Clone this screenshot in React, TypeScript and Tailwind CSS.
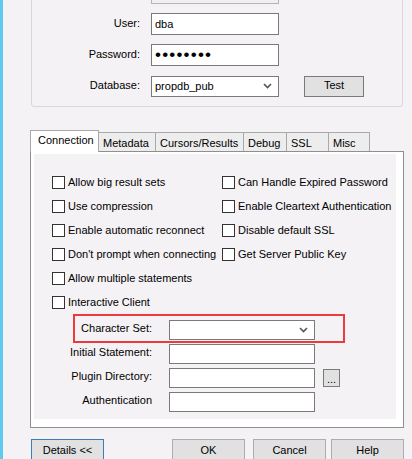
import React from "react";

const font = { fontFamily: '"Liberation Sans", Arial, sans-serif' };

function Chevron() {
  return (
    <svg width="9" height="6" viewBox="0 0 9 6" className="shrink-0">
      <path d="M1 1 L4.5 4.5 L8 1" fill="none" stroke="#555" strokeWidth="1.6" />
    </svg>
  );
}

function Checkbox({ label }: { label: string }) {
  return (
    <div className="flex items-center h-[24px]">
      <div className="w-[13px] h-[13px] border border-[#333] bg-white shrink-0" />
      <span className="ml-[3px] whitespace-nowrap">{label}</span>
    </div>
  );
}

function Button({ label, className = "" }: { label: string; className?: string }) {
  return (
    <div
      className={`h-[23px] w-[73px] border bg-[#e1e1e1] flex items-center justify-center pb-[1px] ${className}`}
    >
      {label}
    </div>
  );
}

const tabs = [
  { label: "Metadata", w: "w-[57px]" },
  { label: "Cursors/Results", w: "w-[88px]" },
  { label: "Debug", w: "w-[43px]" },
  { label: "SSL", w: "w-[42px]" },
  { label: "Misc", w: "w-[41px]" },
];

const leftChecks = [
  "Allow big result sets",
  "Use compression",
  "Enable automatic reconnect",
  "Don't prompt when connecting",
  "Allow multiple statements",
  "Interactive Client",
];
const rightChecks = [
  "Can Handle Expired Password",
  "Enable Cleartext Authentication",
  "Disable default SSL",
  "Get Server Public Key",
];

export default function App() {
  return (
    <div
      className="w-[412px] h-[459px] flex bg-[#f5f2f5] overflow-hidden text-[11px] text-black"
      style={font}
    >
      <div className="w-[3px] bg-[#5fcaf1] shrink-0" />
      <div className="flex flex-col ml-[27px] w-[374px]">
        {/* connection group */}
        <div className="ml-[1px] w-[372px] -mt-[30px] border border-[#d6d8de] rounded-[3px] pt-[11px] pb-[9px] flex flex-col gap-[9px]">
          <div className="flex items-center h-[22px]">
            <div className="w-[108px]" />
            <div className="ml-[11px] w-[128px] h-[22px] border border-[#b5b5b5] bg-[#f0f0f0]" />
          </div>
          <div className="flex items-center h-[22px]">
            <div className="w-[108px] text-right pb-[2px]">User:</div>
            <div className="ml-[11px] w-[128px] h-[22px] border border-[#7a7a7a] bg-white pl-[3px] flex items-center">
              dba
            </div>
          </div>
          <div className="flex items-center h-[22px]">
            <div className="w-[108px] text-right pb-[2px]">Password:</div>
            <div className="ml-[11px] w-[128px] h-[22px] border border-[#7a7a7a] bg-white pl-[3px] flex items-center">
              <span className="text-[17px] leading-none tracking-[1.2px] -mt-[1px]">••••••••</span>
            </div>
          </div>
          <div className="flex items-center h-[22px]">
            <div className="w-[108px] text-right pb-[2px]">Database:</div>
            <div className="ml-[11px] w-[128px] h-[21px] border border-[#7a7a7a] bg-white pl-[3px] pr-[6px] flex items-center justify-between">
              <span>propdb_pub</span>
              <Chevron />
            </div>
            <div className="ml-[25px] w-[60px] h-[21px] border border-[#7a7a7a] bg-[#e1e1e1] flex items-center justify-center pb-[1px]">
              Test
            </div>
          </div>
        </div>

        {/* tabs */}
        <div className="mt-[23px] h-[21px] flex items-end">
          <div className="relative z-10 w-[69px] h-[22px] -mb-[1px] bg-white border-l border-t border-r border-[#a9a9a9] pl-[7px] pt-[4px] leading-none">
            Connection
          </div>
          {tabs.map((t) => (
            <div
              key={t.label}
              className={`${t.w} h-[19px] bg-[#ededed] border-t border-r border-[#a9a9a9] pl-[4px] pt-[5px] leading-none`}
            >
              {t.label}
            </div>
          ))}
        </div>

        {/* panel */}
        <div className="w-[374px] h-[278px] border border-[#8f8f8f] bg-white pl-[3px] pr-[7px] pt-[2px] pb-[8px]">
          <div className="relative h-full bg-[#f5f2f5] pt-[16px] pb-[7px]">
            <div className="flex pl-[18px]">
              <div className="w-[170px] flex flex-col">
                {leftChecks.map((c) => (
                  <Checkbox key={c} label={c} />
                ))}
              </div>
              <div className="flex flex-col">
                {rightChecks.map((c) => (
                  <Checkbox key={c} label={c} />
                ))}
              </div>
            </div>

            <div className="mt-[6px] flex flex-col gap-[4px]">
              {[
                { label: "Character Set:", select: true },
                { label: "Initial Statement:" },
                { label: "Plugin Directory:", browse: true },
                { label: "Authentication" },
              ].map((f) => (
                <div key={f.label} className="flex h-[20px]">
                  <div className="w-[118px] text-right pt-[2px] leading-[13px]">{f.label}</div>
                  <div className="ml-[17px] w-[146px] h-[20px] border border-[#7a7a7a] bg-white flex items-center justify-end pr-[6px]">
                    {f.select && <Chevron />}
                  </div>
                  {f.browse && (
                    <div className="ml-[8px] w-[17px] h-[18px] mt-[1px] border border-[#7a7a7a] bg-[#e1e1e1] flex items-end justify-center leading-[12px] pb-[1px]">
                      ...
                    </div>
                  )}
                </div>
              ))}
            </div>

            {/* highlight annotation */}
            <div className="absolute left-[39px] top-[160px] w-[272px] h-[29px] border-2 border-[#ec3b3f]" />
          </div>
        </div>

        {/* buttons */}
        <div className="mt-[11px] flex">
          <Button label="Details <<" className="ml-[1px] border-[#3f7cb5]" />
          <Button label="OK" className="ml-[68px] border-[#adadad]" />
          <Button label="Cancel" className="ml-[8px] border-[#adadad]" />
          <Button label="Help" className="ml-[5px] w-[72px] border-[#adadad]" />
        </div>
      </div>
    </div>
  );
}
